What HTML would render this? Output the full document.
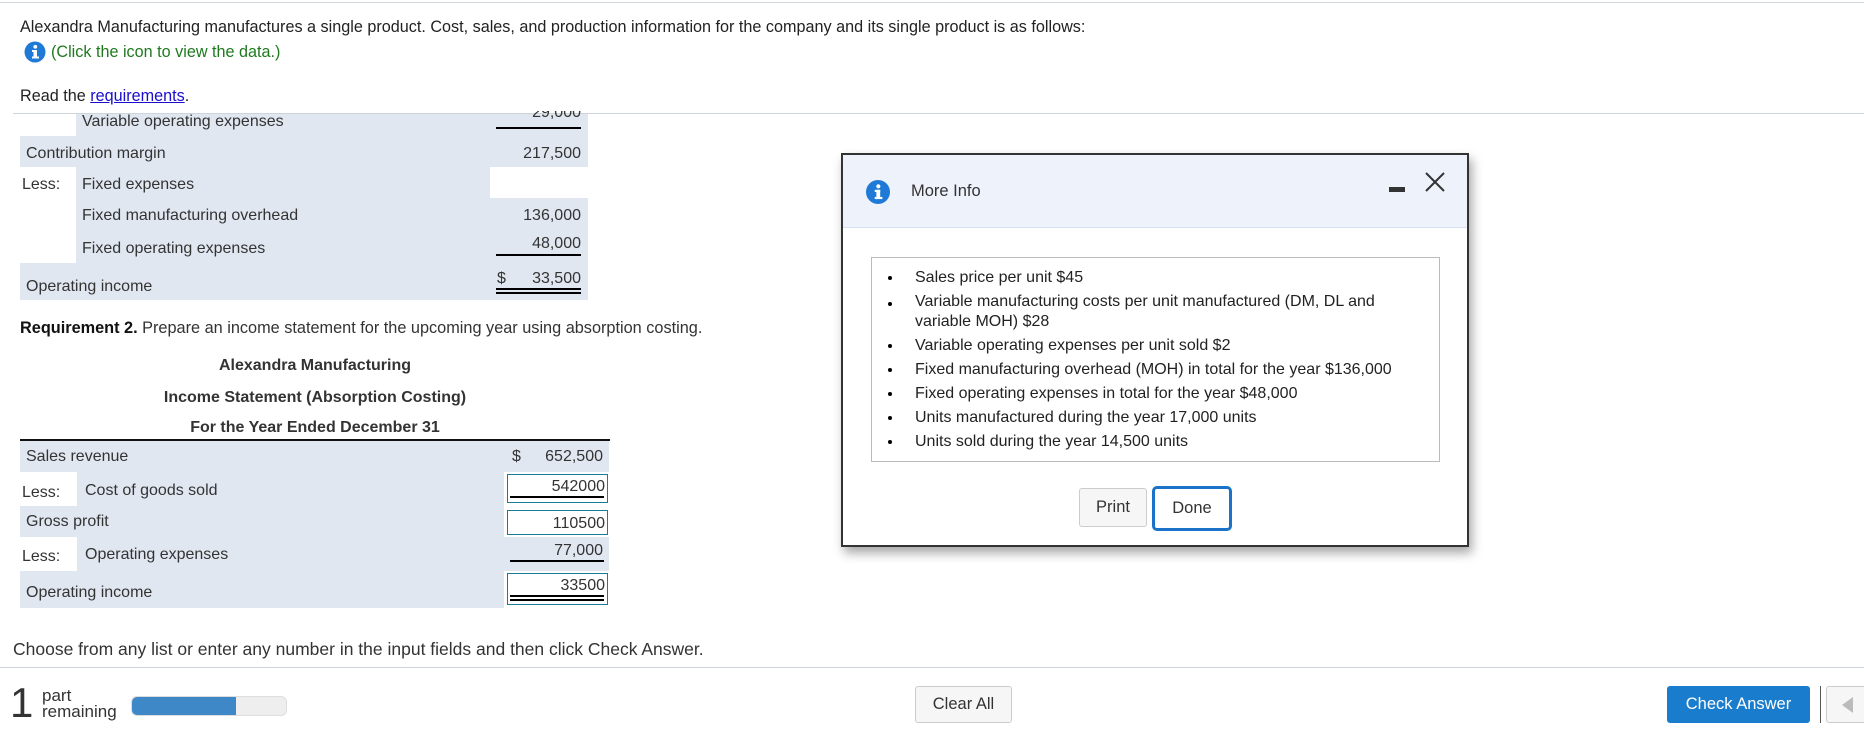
<!DOCTYPE html>
<html><head><meta charset="utf-8">
<style>
*{margin:0;padding:0;box-sizing:border-box}
body{width:1864px;height:733px;overflow:hidden;background:#fff;font-family:"Liberation Sans",Arial,sans-serif;color:#222;position:relative}
.a{position:absolute;white-space:nowrap}
.t{font-size:16px;color:#333}
.bg{position:absolute;background:#e1e7f1}
.ul{position:absolute;height:1.5px;background:#000}
.box{position:absolute;border:1.5px solid #1a7a9a;background:#fff;text-align:right;padding-right:2px;font-size:16px;color:#333}
.r{text-align:right}
.modal li{list-style:none;position:relative;padding-left:42px;font-size:16px;line-height:24px;color:#222}
.modal li:before{content:"";position:absolute;left:15px;top:10px;width:4px;height:4px;border-radius:50%;background:#000}
</style></head><body>
<div class="a" style="left:0;top:2px;width:1864px;height:1px;background:#d4d8e0"></div>
<div class="a" style="left:20px;top:18px;font-size:16.2px">Alexandra Manufacturing manufactures a single product. Cost, sales, and production information for the company and its single product is as follows:</div>
<svg class="a" style="left:24px;top:41px" width="22" height="22" viewBox="0 0 22 22"><circle cx="11" cy="11" r="10.5" fill="#1e7ad6"/><rect x="9.5" y="9" width="3.5" height="8" fill="#fff"/><rect x="8" y="9" width="5" height="2" fill="#fff"/><rect x="8" y="15.5" width="7" height="2" fill="#fff"/><circle cx="11.3" cy="5.8" r="1.9" fill="#fff"/></svg>
<div class="a" style="left:51px;top:43px;font-size:16.2px;color:#1f7a1f">(Click the icon to view the data.)</div>
<div class="a" style="left:20px;top:87px;font-size:16.2px">Read the <span style="color:#1a0dcc;text-decoration:underline">requirements</span>.</div>
<div class="a" style="left:13px;top:113px;width:1851px;height:1px;background:#cfd3da"></div>

<div class="bg" style="left:76px;top:114px;width:512px;height:22px"></div>
<div class="bg" style="left:20px;top:136px;width:568px;height:31px"></div>
<div class="bg" style="left:76px;top:167px;width:414px;height:96px"></div>
<div class="bg" style="left:490px;top:198px;width:98px;height:65px"></div>
<div class="bg" style="left:20px;top:263px;width:568px;height:37px"></div>
<div class="a t" style="left:82px;top:113px">Variable operating expenses</div>
<div class="a t r" style="left:480px;top:104px;width:101px;clip-path:inset(7px 0 0 0)">29,000</div>
<div class="ul" style="left:496px;top:127px;width:85px"></div>
<div class="a t" style="left:26px;top:145px">Contribution margin</div>
<div class="a t r" style="left:480px;top:145px;width:101px">217,500</div>
<div class="a t" style="left:22px;top:176px">Less:</div>
<div class="a t" style="left:82px;top:176px">Fixed expenses</div>
<div class="a t" style="left:82px;top:207px">Fixed manufacturing overhead</div>
<div class="a t r" style="left:480px;top:207px;width:101px">136,000</div>
<div class="a t" style="left:82px;top:240px">Fixed operating expenses</div>
<div class="a t r" style="left:480px;top:235px;width:101px">48,000</div>
<div class="ul" style="left:496px;top:254px;width:85px"></div>
<div class="a t" style="left:26px;top:278px">Operating income</div>
<div class="a t" style="left:497px;top:270px">$</div>
<div class="a t r" style="left:480px;top:270px;width:101px">33,500</div>
<div class="ul" style="left:496px;top:288px;width:85px"></div>
<div class="ul" style="left:496px;top:292px;width:85px"></div>

<div class="a" style="left:20px;top:319px;font-size:16.3px;color:#333"><b style="color:#111">Requirement 2.</b> Prepare an income statement for the upcoming year using absorption costing.</div>
<div class="a" style="left:20px;top:357px;width:590px;text-align:center;font-size:16px;font-weight:bold;color:#333">Alexandra Manufacturing</div>
<div class="a" style="left:20px;top:389px;width:590px;text-align:center;font-size:16px;font-weight:bold;color:#333">Income Statement (Absorption Costing)</div>
<div class="a" style="left:20px;top:419px;width:590px;text-align:center;font-size:16px;font-weight:bold;color:#333">For the Year Ended December 31</div>
<div class="a" style="left:20px;top:439px;width:590px;height:2px;background:#111"></div>

<div class="bg" style="left:20px;top:441px;width:589px;height:31px"></div>
<div class="bg" style="left:77px;top:472px;width:427px;height:34px"></div>
<div class="bg" style="left:20px;top:506px;width:484px;height:31px"></div>
<div class="bg" style="left:77px;top:537px;width:532px;height:34px"></div>
<div class="bg" style="left:20px;top:571px;width:484px;height:37px"></div>
<div class="a t" style="left:26px;top:448px">Sales revenue</div>
<div class="a t" style="left:512px;top:448px">$</div>
<div class="a t r" style="left:500px;top:448px;width:103px">652,500</div>
<div class="a t" style="left:22px;top:484px">Less:</div>
<div class="a t" style="left:85px;top:482px">Cost of goods sold</div>
<div class="box" style="left:507px;top:474px;width:101px;height:29px;padding-top:3px">542000</div>
<div class="ul" style="left:510px;top:496px;width:94px"></div>
<div class="a t" style="left:26px;top:513px">Gross profit</div>
<div class="box" style="left:507px;top:510px;width:101px;height:25px;padding-top:4px">110500</div>
<div class="a t" style="left:22px;top:548px">Less:</div>
<div class="a t" style="left:85px;top:546px">Operating expenses</div>
<div class="a t r" style="left:500px;top:542px;width:103px">77,000</div>
<div class="ul" style="left:510px;top:560px;width:94px"></div>
<div class="a t" style="left:26px;top:584px">Operating income</div>
<div class="box" style="left:507px;top:573px;width:101px;height:32px;padding-top:3px">33500</div>
<div class="ul" style="left:510px;top:595px;width:94px"></div>
<div class="ul" style="left:510px;top:599px;width:94px"></div>

<div class="a" style="left:13px;top:639px;font-size:17.5px;color:#333">Choose from any list or enter any number in the input fields and then click Check Answer.</div>
<div class="a" style="left:0;top:667px;width:1864px;height:1px;background:#cfd3da"></div>
<div class="a" style="left:10px;top:681px;font-size:42px;color:#333;line-height:44px">1</div>
<div class="a" style="left:42px;top:688px;font-size:17px;line-height:16px;color:#333">part<br>remaining</div>
<div class="a" style="left:131px;top:696px;width:156px;height:20px;border-radius:6px;background:#eee;border:1px solid #ddd;overflow:hidden"><div style="width:104px;height:100%;background:#3f88c8"></div></div>
<div class="a" style="left:915px;top:686px;width:97px;height:37px;border:1px solid #ccc;border-radius:3px;background:#f6f6f6;font-size:16.5px;color:#333;text-align:center;line-height:35px">Clear All</div>
<div class="a" style="left:1667px;top:686px;width:143px;height:37px;border-radius:3px;background:#1a7ccc;font-size:16.5px;color:#fff;text-align:center;line-height:37px">Check Answer</div>
<div class="a" style="left:1820px;top:686px;width:1px;height:37px;background:#555"></div>
<div class="a" style="left:1826px;top:686px;width:50px;height:37px;border:1px solid #ccc;border-radius:3px;background:#f6f6f6"></div>
<svg class="a" style="left:1842px;top:697px" width="12" height="16"><path d="M11 0 L0 8 L11 16Z" fill="#bbb"/></svg>

<div class="a modal" style="left:841px;top:153px;width:628px;height:394px;border:2px solid #333;background:#fff;box-shadow:3px 6px 10px rgba(0,0,0,.35);white-space:normal">
 <div style="position:absolute;left:0;top:0;width:100%;height:73px;background:#eef3fb;border-bottom:1px solid #d6e2f2"></div>
 <svg style="position:absolute;left:23px;top:25px" width="24" height="24" viewBox="0 0 22 22"><circle cx="11" cy="11" r="11" fill="#1e7ad6"/><rect x="9.5" y="9" width="3.5" height="8" fill="#fff"/><rect x="8" y="9" width="5" height="2" fill="#fff"/><rect x="8" y="15.5" width="7" height="2" fill="#fff"/><circle cx="11.3" cy="5.8" r="1.9" fill="#fff"/></svg>
 <div style="position:absolute;left:68px;top:27px;font-size:16.5px;color:#333">More Info</div>
 <div style="position:absolute;left:546px;top:32px;width:16px;height:5px;background:#333"></div>
 <svg style="position:absolute;left:581px;top:17px" width="22" height="20"><path d="M2 1 L20 19 M20 1 L2 19" stroke="#333" stroke-width="2"/></svg>
 <div style="position:absolute;left:28px;top:102px;width:569px;height:205px;border:1px solid #bbb"></div>
 <ul style="position:absolute;left:30px;top:111px;width:545px">
  <li>Sales price per unit $45</li>
  <li style="line-height:20px;margin:2px 0 0">Variable manufacturing costs per unit manufactured (DM, DL and variable MOH) $28</li>
  <li style="margin-top:2px">Variable operating expenses per unit sold $2</li>
  <li>Fixed manufacturing overhead (MOH) in total for the year $136,000</li>
  <li>Fixed operating expenses in total for the year $48,000</li>
  <li>Units manufactured during the year 17,000 units</li>
  <li>Units sold during the year 14,500 units</li>
 </ul>
 <div style="position:absolute;left:236px;top:333px;width:68px;height:39px;border:1px solid #ccc;border-radius:3px;background:#f6f6f6;font-size:16.5px;color:#333;text-align:center;line-height:37px">Print</div>
 <div style="position:absolute;left:309px;top:331px;width:80px;height:45px;border:3px solid #1a73c8;border-radius:5px;background:#fff;font-size:16.5px;color:#333;text-align:center;line-height:39px">Done</div>
</div>
</body></html>
